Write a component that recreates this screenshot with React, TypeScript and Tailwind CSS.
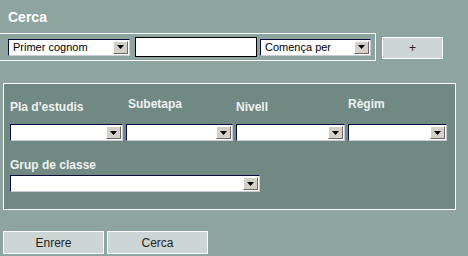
import React from "react";

function Sel({ w, text = "" }: { w: number; text?: string }) {
  return (
    <div
      className="flex h-[17px] items-stretch border border-t-[#0a0a3c] border-l-[#0a0a3c] border-b-[#c8ccd4] border-r-[#c8ccd4] bg-white"
      style={{ width: w }}
    >
      <div className="flex-1 truncate pl-[4px] text-[11px] leading-[15px] text-black">{text}</div>
      <div className="m-[1px] flex w-[15px] items-center justify-center border border-t-white border-l-white border-b-[#6b6b6b] border-r-[#6b6b6b] bg-[#d4d0c8]">
        <svg width="7" height="4" viewBox="0 0 7 4">
          <path d="M0 0h7L3.5 4z" fill="#000" />
        </svg>
      </div>
    </div>
  );
}

export default function App() {
  return (
    <div
      className="relative h-[256px] w-[468px] overflow-hidden bg-[#8ea59f]"
      style={{ fontFamily: '"Liberation Sans", Arial, sans-serif' }}
    >
      <div className="pl-[8px] pt-[9px] text-[14px] font-bold leading-[16px] text-white">Cerca</div>
      <div className="mt-[8px] flex items-start">
        <div className="flex h-[28px] w-[376px] items-center border-y border-r border-white pl-[8px]">
          <Sel w={122} text="Primer cognom" />
          <div className="ml-[5px] h-[20px] w-[122px] border border-black bg-white" />
          <div className="ml-[3px]">
            <Sel w={111} text="Comença per" />
          </div>
        </div>
        <div className="ml-[6px] mt-[4px] flex h-[22px] w-[61px] items-center justify-center border border-white bg-[#cdd6d4] text-[12px] text-[#222]">
          +
        </div>
      </div>
      <div className="ml-[3px] mt-[22px] h-[127px] w-[453px] border border-white bg-[#718983] px-[6px]">
        <div className="mt-[13px] flex h-[16px] text-[12px] font-bold leading-[14px] text-[#eef2f1]">
          <div className="w-[118px] pt-[3px]">Pla d'estudis</div>
          <div className="w-[108px]">Subetapa</div>
          <div className="w-[112px] pt-[3px]">Nivell</div>
          <div>Règim</div>
        </div>
        <div className="mt-[11px] flex gap-[3px]">
          <Sel w={113} />
          <Sel w={107} />
          <Sel w={109} />
          <Sel w={99} />
        </div>
        <div className="mt-[17px] text-[12px] font-bold leading-[14px] text-[#eef2f1]">Grup de classe</div>
        <div className="mt-[3px]">
          <Sel w={250} />
        </div>
      </div>
      <div className="ml-[3px] mt-[21px] flex gap-[3px]">
        <div className="flex h-[23px] w-[101px] items-center justify-center border border-white bg-[#cdd6d4] text-[12px] text-[#222]">
          Enrere
        </div>
        <div className="flex h-[23px] w-[101px] items-center justify-center border border-white bg-[#cdd6d4] text-[12px] text-[#222]">
          Cerca
        </div>
      </div>
    </div>
  );
}
